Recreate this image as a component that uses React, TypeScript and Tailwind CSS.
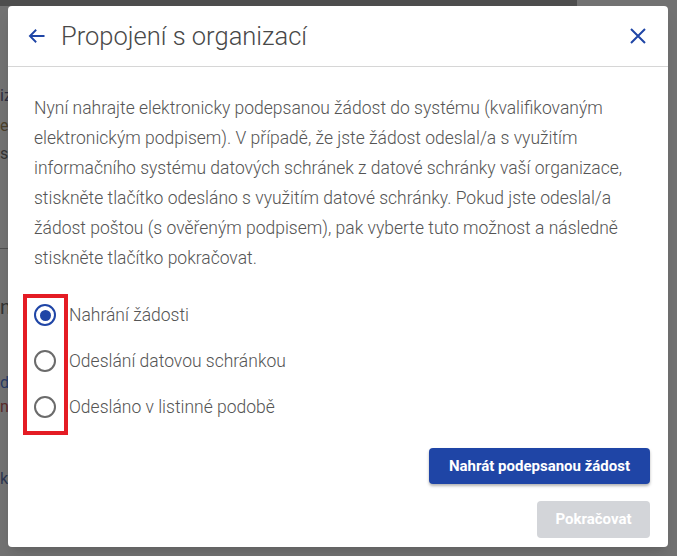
import { useState } from "react";

type Option = { id: string; label: string };

const OPTIONS: Option[] = [
  { id: "upload", label: "Nahrání žádosti" },
  { id: "databox", label: "Odeslání datovou schránkou" },
  { id: "paper", label: "Odesláno v listinné podobě" },
];

function Radio({ checked }: { checked: boolean }) {
  return (
    <span
      className={`flex h-[22px] w-[22px] shrink-0 items-center justify-center rounded-full border-[2.5px] ${
        checked ? "border-[#1f45a6]" : "border-[#6b6b6b]"
      }`}
    >
      {checked && <span className="h-[11px] w-[11px] rounded-full bg-[#1f45a6]" />}
    </span>
  );
}

export default function App() {
  const [selected, setSelected] = useState("upload");

  return (
    <div className="relative h-[556px] w-[677px] overflow-hidden bg-[#727272] font-['Roboto',sans-serif]">
      {/* page behind the overlay */}
      <div className="h-[6px] w-[577px] bg-[#4d4d4d]" />
      <div className="flex flex-col text-[16px] leading-none">
        <span className="mt-[82px] text-[#2f2f40]">iz</span>
        <span className="mt-[14px] text-[#4a3f2a]">et</span>
        <span className="mt-[12px] text-[#333]">s</span>
        <div className="mt-[86px] h-px w-[8px] bg-[#4f4f4f]" />
        <span className="mt-[48px] text-[20px] text-[#333]">n</span>
        <span className="mt-[58px] text-[#283a66]">dk</span>
        <span className="mt-[8px] text-[#5a2a2a]">n</span>
        <span className="mt-[56px] text-[#2b3550]">k</span>
      </div>

      {/* dialog */}
      <div className="absolute left-[8px] top-[6px] flex h-[541px] w-[660px] flex-col rounded-[4px] bg-white shadow-lg">
        <div className="flex h-[61px] shrink-0 items-center border-b border-[#d6d6d6] pl-[17px] pr-[18px]">
          <button className="flex h-[24px] w-[24px] items-center justify-center text-[#1f45a6]" aria-label="Zpět">
            <svg width="20" height="20" viewBox="0 0 24 24" fill="none" stroke="currentColor" strokeWidth="2.2">
              <path d="M21 12H3.5M11 4.5L3.5 12l7.5 7.5" />
            </svg>
          </button>
          <h1 className="ml-[12px] font-['Roboto_Light','Roboto',sans-serif] text-[25.5px] font-light text-[#484848]">
            Propojení s organizací
          </h1>
          <button className="ml-auto flex h-[24px] w-[24px] items-center justify-center text-[#1f45a6]" aria-label="Zavřít">
            <svg width="18" height="18" viewBox="0 0 18 18" fill="none" stroke="currentColor" strokeWidth="2">
              <path d="M2 2l14 14M16 2L2 16" />
            </svg>
          </button>
        </div>

        <div className="flex flex-1 flex-col pl-[26px] pr-[18px] pt-[26px] pb-[9px] font-['Roboto_Light','Roboto',sans-serif] font-light">
          <p className="text-[17.5px] leading-[30px] text-[#555]">
            Nyní nahrajte elektronicky podepsanou žádost do systému (kvalifikovaným elektronickým podpisem). V
            případě, že jste žádost odeslal/a s využitím informačního systému datových schránek z datové schránky
            vaší organizace, stiskněte tlačítko odesláno s využitím datové schránky. Pokud jste odeslal/a žádost
            poštou (s ověřeným podpisem), pak vyberte tuto možnost a následně stiskněte tlačítko pokračovat.
          </p>

          <div className="relative mt-[19px] flex flex-col">
            {OPTIONS.map((o) => (
              <label
                key={o.id}
                className="flex h-[46px] cursor-pointer items-center gap-[13px]"
                onClick={() => setSelected(o.id)}
              >
                <Radio checked={selected === o.id} />
                <span className="text-[17.5px] text-[#555]">{o.label}</span>
              </label>
            ))}
            {/* highlight frame around the radios */}
            <div className="pointer-events-none absolute left-[-11px] top-[2px] h-[141px] w-[45px] border-4 border-[#e41c24]" />
          </div>

          <div className="mt-[18px] flex flex-col items-end gap-[17px] font-['Roboto',sans-serif]">
            <button className="h-[36px] w-[221px] rounded-[4px] bg-[#1f45a6] text-[15px] font-bold text-white shadow-[0_2px_3px_rgba(0,0,0,0.3)]">
              Nahrát podepsanou žádost
            </button>
            <button className="h-[37px] w-[113px] rounded-[4px] bg-[#d3d5d9] text-[15px] font-bold text-white">
              Pokračovat
            </button>
          </div>
        </div>
      </div>
    </div>
  );
}
